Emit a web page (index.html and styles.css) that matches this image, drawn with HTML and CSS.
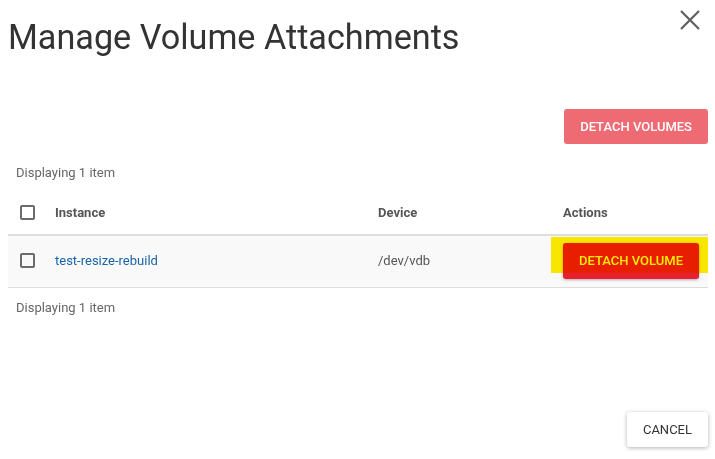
FILE: index.html
```html
<!DOCTYPE html>
<html>
<head>
<meta charset="utf-8">
<link rel="stylesheet" href="styles.css">
</head>
<body>
<div class="dialog">
  <header class="dialog-header">
    <h1 class="dialog-title">Manage Volume Attachments</h1>
    <button class="close-btn" aria-label="Close">
      <svg width="20" height="20" viewBox="0 0 20 20"><path d="M1 1L19 19M19 1L1 19" stroke="#5f5f5f" stroke-width="2.2" fill="none"/></svg>
    </button>
  </header>
  <div class="toolbar">
    <button class="btn btn-danger btn-disabled">Detach Volumes</button>
  </div>
  <div class="count">Displaying 1 item</div>
  <table class="table">
    <colgroup>
      <col class="c-check">
      <col class="c-instance">
      <col class="c-device">
      <col class="c-actions">
    </colgroup>
    <thead>
      <tr>
        <th><span class="checkbox"></span></th>
        <th>Instance</th>
        <th>Device</th>
        <th>Actions</th>
      </tr>
    </thead>
    <tbody>
      <tr>
        <td><span class="checkbox"></span></td>
        <td><a class="link" href="#">test-resize-rebuild</a></td>
        <td>/dev/vdb</td>
        <td class="actions-cell">
          <div class="action-wrap">
            <button class="btn btn-danger">Detach Volume</button>
            <span class="highlight"></span>
          </div>
        </td>
      </tr>
    </tbody>
  </table>
  <div class="count count-bottom">Displaying 1 item</div>
  <footer class="dialog-footer">
    <button class="btn btn-default">Cancel</button>
  </footer>
</div>
</body>
</html>
```

FILE: styles.css
```css
* { box-sizing: border-box; }
html, body { margin: 0; padding: 0; background: #fff; }
body { font-family: Roboto, "Noto Sans", Arial, sans-serif; color: #333; }

.dialog {
  display: flex;
  flex-direction: column;
  min-height: 459px;
  padding: 0 7px 12px 8px;
}

.dialog-header {
  display: flex;
  justify-content: space-between;
  align-items: flex-start;
}
.dialog-title {
  margin: 17px 0 0 0;
  font-size: 34.2px;
  font-weight: 400;
  line-height: 40px;
  color: #333;
}
.close-btn {
  margin: 10px 8px 0 0;
  padding: 0;
  border: 0;
  background: none;
  width: 20px;
  height: 20px;
  display: block;
}
.close-btn svg { display: block; }

.toolbar {
  display: flex;
  justify-content: flex-end;
  margin-top: 52px;
}

.btn {
  font-family: Roboto, Arial, sans-serif;
  font-size: 13px;
  font-weight: 500;
  text-transform: uppercase;
  white-space: nowrap;
  height: 36px;
  padding: 0 16px;
  border: 0;
  border-radius: 3px;
  cursor: pointer;
  flex-shrink: 0;
}
.btn-danger {
  background: #e8202e;
  color: #fff;
  box-shadow: 0 1px 3px rgba(0,0,0,0.3);
}
.btn-disabled {
  background: #ef6b73;
  box-shadow: none;
  height: 35px;
}
.btn-default {
  background: #fff;
  color: #333;
  font-weight: 400;
  height: 35px;
  padding: 0 16px;
  box-shadow: 0 1px 4px rgba(0,0,0,0.3);
}

.count {
  font-size: 13px;
  line-height: 15px;
  color: #666;
  padding-left: 8px;
  margin-top: 21px;
}
.count-bottom { margin-top: 12px; }

.table {
  width: 100%;
  table-layout: fixed;
  border-collapse: collapse;
  margin-top: 14px;
  font-size: 13px;
}
.c-check { width: 35px; }
.c-instance { width: 323px; }
.c-device { width: 185px; }

.table th {
  text-align: left;
  font-weight: 700;
  color: #555;
  height: 41px;
  padding: 0 12px 3px 12px;
  vertical-align: middle;
  border-bottom: 2px solid #ddd;
}
.table td {
  height: 52px;
  padding: 0 12px 1px 12px;
  vertical-align: middle;
  background: #f9f9f9;
  border-bottom: 1px solid #ddd;
  color: #555;
  white-space: nowrap;
}
.actions-cell { overflow: visible; }

.checkbox {
  display: block;
  width: 15px;
  height: 15px;
  border: 2px solid #6b6b6b;
  border-radius: 2px;
  background: #fff;
}
td .checkbox { background: transparent; }

.link {
  color: #1764a8;
  text-decoration: none;
}

.action-wrap {
  position: relative;
  display: flex;
}
.highlight {
  position: absolute;
  left: -12px;
  right: -12px;
  top: -6px;
  height: 36px;
  background: #ffec00;
  mix-blend-mode: multiply;
  pointer-events: none;
}

.dialog-footer {
  margin-top: auto;
  display: flex;
  justify-content: flex-end;
}
```
